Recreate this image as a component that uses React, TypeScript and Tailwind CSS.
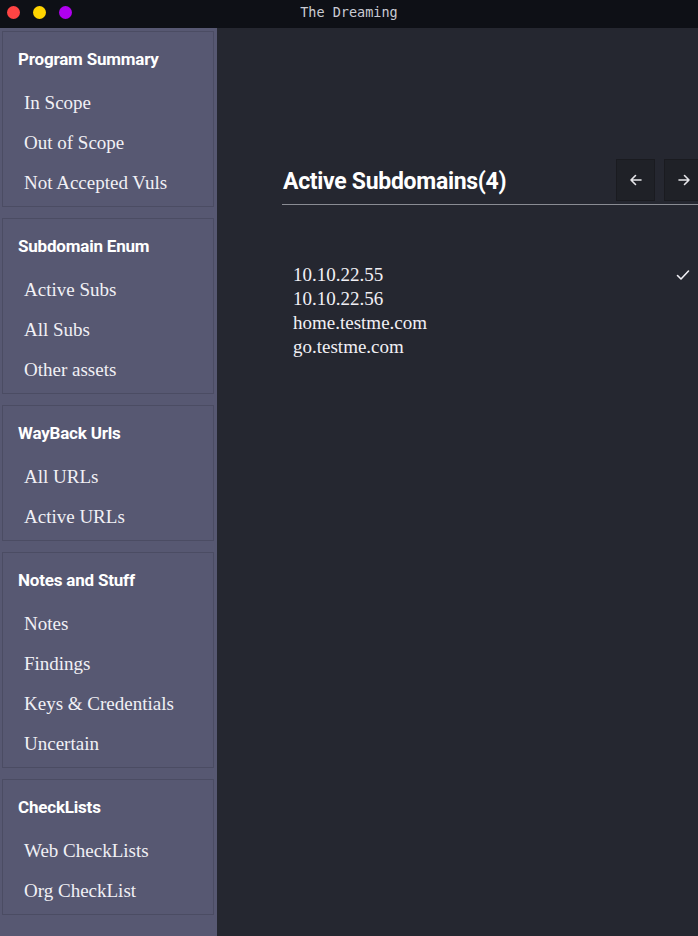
const SECTIONS = [
  { title: 'Program Summary', items: ['In Scope', 'Out of Scope', 'Not Accepted Vuls'] },
  { title: 'Subdomain Enum', items: ['Active Subs', 'All Subs', 'Other assets'] },
  { title: 'WayBack Urls', items: ['All URLs', 'Active URLs'] },
  { title: 'Notes and Stuff', items: ['Notes', 'Findings', 'Keys & Credentials', 'Uncertain'] },
  { title: 'CheckLists', items: ['Web CheckLists', 'Org CheckList'] },
]

const SUBS = [
  { host: '10.10.22.55', checked: true },
  { host: '10.10.22.56', checked: false },
  { host: 'home.testme.com', checked: false },
  { host: 'go.testme.com', checked: false },
]

const heading = { fontFamily: 'Roboto, "Liberation Sans", sans-serif' }
const serif = { fontFamily: '"Liberation Serif", "DejaVu Serif", serif' }

function Sidebar() {
  return (
    <aside className="w-[217px] shrink-0 bg-[#575872] pt-[3px] pl-[2px] pr-[3px] flex flex-col gap-[11px]">
      {SECTIONS.map(s => (
        <div key={s.title} className="border border-[#4b4c63] pt-[17px] pb-[3px]">
          <h3 className="text-white font-bold text-[17px] leading-[20px] pl-[15px] tracking-[-0.2px]" style={heading}>
            {s.title}
          </h3>
          <ul className="mt-[14px]">
            {s.items.map(i => (
              <li key={i} className="text-[#f1f0f5] text-[19px] leading-[40px] pl-[21px]" style={serif}>
                {i}
              </li>
            ))}
          </ul>
        </div>
      ))}
    </aside>
  )
}

export default function App() {
  return (
    <div className="w-[698px] h-[936px] flex flex-col bg-[#252730] overflow-hidden">
      <div className="h-[28px] shrink-0 bg-[#0e1016] relative flex items-center">
        <div className="flex items-center gap-[13px] pl-[7px] -mt-[3px]">
          <span className="w-[13px] h-[13px] rounded-full bg-[#ff4444]" />
          <span className="w-[13px] h-[13px] rounded-full bg-[#ffd400]" />
          <span className="w-[13px] h-[13px] rounded-full bg-[#b000f0]" />
        </div>
        <div
          className="absolute inset-x-0 top-0 h-[24px] flex items-center justify-center text-[13.5px] text-[#c9cbd3]"
          style={{ fontFamily: '"DejaVu Sans Mono", "Liberation Mono", monospace' }}
        >
          The Dreaming
        </div>
      </div>
      <div className="flex flex-1">
        <Sidebar />
        <main className="flex-1 pl-[65px] pt-[131px]">
          <div className="flex items-center justify-between border-b border-[#8a8c93] pb-[2px] pl-[1px]">
            <h2 className="text-white font-bold text-[23px] tracking-[-0.3px] mt-[4px]" style={heading}>
              Active Subdomains(4)
            </h2>
            <div className="flex gap-[9px] mb-[1px] -mr-[5px]">
              <button className="w-[39px] h-[42px] bg-[#1f2127] border border-[#1a1b20] flex items-center justify-center text-[#e6e6ea]">
                <svg width="14" height="14" viewBox="0 0 14 14" fill="none" stroke="currentColor" strokeWidth="1.6" strokeLinecap="round" strokeLinejoin="round">
                  <path d="M12 7H2M6.5 2.5L2 7l4.5 4.5" />
                </svg>
              </button>
              <button className="w-[39px] h-[42px] bg-[#1f2127] border border-[#1a1b20] flex items-center justify-center text-[#e6e6ea]">
                <svg width="14" height="14" viewBox="0 0 14 14" fill="none" stroke="currentColor" strokeWidth="1.6" strokeLinecap="round" strokeLinejoin="round">
                  <path d="M2 7h10M7.5 2.5L12 7l-4.5 4.5" />
                </svg>
              </button>
            </div>
          </div>
          <ul className="mt-[58px] pl-[11px]">
            {SUBS.map(s => (
              <li key={s.host} className="flex items-center justify-between text-[#f1f0f5] text-[19px] leading-[24px]" style={serif}>
                <span>{s.host}</span>
                {s.checked && (
                  <svg width="14" height="12" viewBox="0 0 14 12" fill="none" stroke="#f1f0f5" strokeWidth="1.6" strokeLinecap="round" strokeLinejoin="round" className="mr-[8px]">
                    <path d="M1.5 6.5l3.5 3.5L12.5 2" />
                  </svg>
                )}
              </li>
            ))}
          </ul>
        </main>
      </div>
    </div>
  )
}
